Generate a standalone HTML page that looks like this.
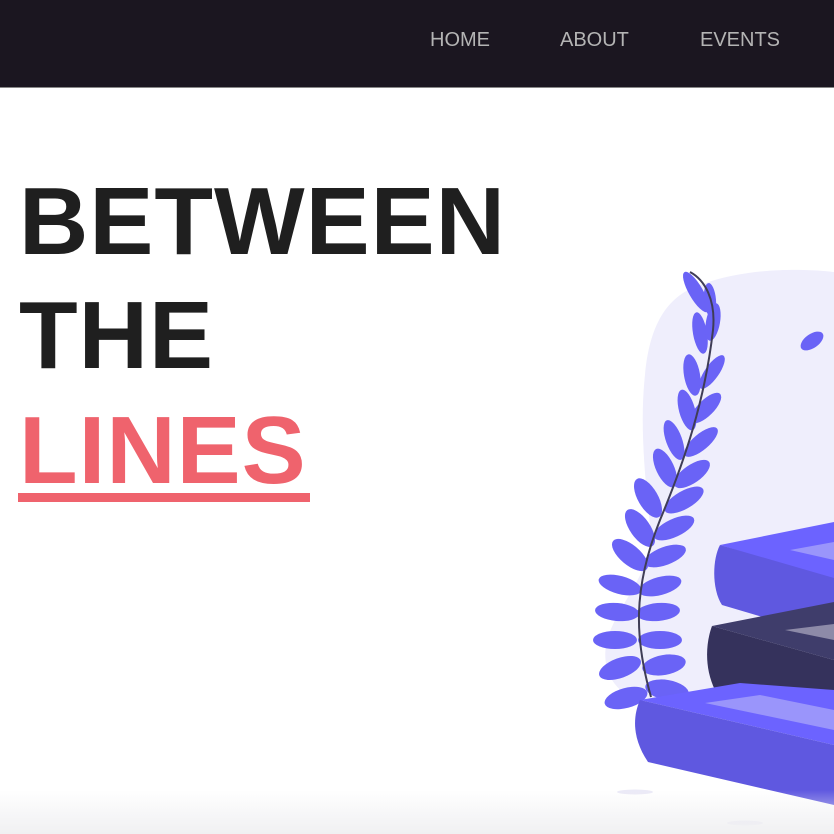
<!DOCTYPE html>
<html><head><meta charset="utf-8"><style>
html,body{margin:0;padding:0;width:834px;height:834px;overflow:hidden;background:#fff;font-family:"Liberation Sans",Arial,sans-serif}
.nav{position:absolute;left:0;top:0;width:834px;height:87px;background:#1b1620;border-bottom:1px solid #888}
.nav span{position:absolute;top:28px;font-size:20px;color:#b4b4b4;line-height:24px}
.h{position:absolute;left:19px;font-size:96px;font-weight:bold;line-height:100px;color:#1f1f1f;white-space:nowrap;letter-spacing:1px}
.fade{position:absolute;left:0;top:790px;width:834px;height:44px;background:linear-gradient(#fff0,#f0f0f2)}
</style></head><body>
<svg style="position:absolute;left:0;top:0" width="834" height="834" viewBox="0 0 834 834">
<path d="M700,285 C760,262 834,272 834,272 L834,700 L700,712 C630,712 600,685 606,645 C614,605 655,575 650,525 C644,470 640,420 645,375 C650,320 670,295 700,285Z" fill="#efeefc"/>
<ellipse cx="635" cy="792" rx="18" ry="2.5" fill="#ebeaf7"/>
<ellipse cx="745" cy="823" rx="18" ry="2.5" fill="#ebeaf7"/>
<g fill="#6a63f6">
<ellipse cx="626" cy="698" rx="22" ry="10" transform="rotate(-15 626 698)"/>
<ellipse cx="667" cy="690" rx="22" ry="10" transform="rotate(10 667 690)"/>
<ellipse cx="620" cy="668" rx="22" ry="10" transform="rotate(-20 620 668)"/>
<ellipse cx="664" cy="665" rx="22" ry="10" transform="rotate(-10 664 665)"/>
<ellipse cx="615" cy="640" rx="22" ry="9" transform="rotate(0 615 640)"/>
<ellipse cx="660" cy="640" rx="22" ry="9" transform="rotate(0 660 640)"/>
<ellipse cx="617" cy="612" rx="22" ry="9" transform="rotate(5 617 612)"/>
<ellipse cx="658" cy="612" rx="22" ry="9" transform="rotate(-5 658 612)"/>
<ellipse cx="620" cy="585" rx="22" ry="9" transform="rotate(15 620 585)"/>
<ellipse cx="660" cy="586" rx="22" ry="9" transform="rotate(-15 660 586)"/>
<ellipse cx="630" cy="555" rx="22" ry="10" transform="rotate(40 630 555)"/>
<ellipse cx="665" cy="556" rx="22" ry="9" transform="rotate(-20 665 556)"/>
<ellipse cx="640" cy="528" rx="22" ry="10" transform="rotate(55 640 528)"/>
<ellipse cx="674" cy="528" rx="22" ry="9" transform="rotate(-25 674 528)"/>
<ellipse cx="648" cy="498" rx="22" ry="10" transform="rotate(60 648 498)"/>
<ellipse cx="684" cy="500" rx="22" ry="9" transform="rotate(-30 684 500)"/>
<ellipse cx="665" cy="468" rx="21" ry="9" transform="rotate(65 665 468)"/>
<ellipse cx="692" cy="474" rx="21" ry="9" transform="rotate(-35 692 474)"/>
<ellipse cx="674" cy="440" rx="21" ry="8" transform="rotate(70 674 440)"/>
<ellipse cx="701" cy="442" rx="21" ry="8" transform="rotate(-40 701 442)"/>
<ellipse cx="687" cy="410" rx="21" ry="8" transform="rotate(75 687 410)"/>
<ellipse cx="706" cy="408" rx="20" ry="8" transform="rotate(-45 706 408)"/>
<ellipse cx="692" cy="375" rx="21" ry="8" transform="rotate(80 692 375)"/>
<ellipse cx="712" cy="372" rx="20" ry="7" transform="rotate(-55 712 372)"/>
<ellipse cx="700" cy="333" rx="21" ry="7" transform="rotate(80 700 333)"/>
<ellipse cx="713" cy="322" rx="19" ry="7" transform="rotate(-80 713 322)"/>
<ellipse cx="696" cy="292" rx="23" ry="7" transform="rotate(60 696 292)"/>
<ellipse cx="710" cy="300" rx="17" ry="6" transform="rotate(85 710 300)"/>
<ellipse cx="812" cy="341" rx="13" ry="7" transform="rotate(-35 812 341)"/>
</g>
<path d="M651,697 C635,640 632,590 660,520 C685,460 705,400 713,330 C716,300 705,280 690,272" fill="none" stroke="#3f3d56" stroke-width="2"/>
<polygon points="720,545 834,522 834,580" fill="#6c63ff"/>
<polygon points="790,550 834,542 834,560" fill="#9a95fb"/>
<path d="M720,545 L834,578 L834,638 L722,605 C712,590 712,560 720,545Z" fill="#5f58e0"/>
<polygon points="712,626 834,602 834,660" fill="#3f3d6b"/>
<polygon points="785,630 834,624 834,640" fill="#8d8aa8"/>
<path d="M712,626 L834,660 L834,720 L715,690 C705,670 705,645 712,626Z" fill="#35325c"/>
<polygon points="640,700 740,683 834,690 834,745" fill="#6c63ff"/>
<polygon points="705,703 760,695 834,710 834,730" fill="#9a95fb"/>
<path d="M640,700 L834,745 L834,805 L648,762 C633,740 632,718 640,700Z" fill="#5f58e0"/>
</svg>
<div class="fade"></div>
<div class="nav"><span style="left:430px">HOME</span><span style="left:560px">ABOUT</span><span style="left:700px">EVENTS</span></div>
<div class="h" style="top:172px">BETWEEN</div>
<div class="h" style="top:286px">THE</div>
<div class="h" style="top:401px;color:#ef636d">LINES</div>
<div style="position:absolute;left:18px;top:493px;width:292px;height:9px;background:#ef636d"></div>
</body></html>
